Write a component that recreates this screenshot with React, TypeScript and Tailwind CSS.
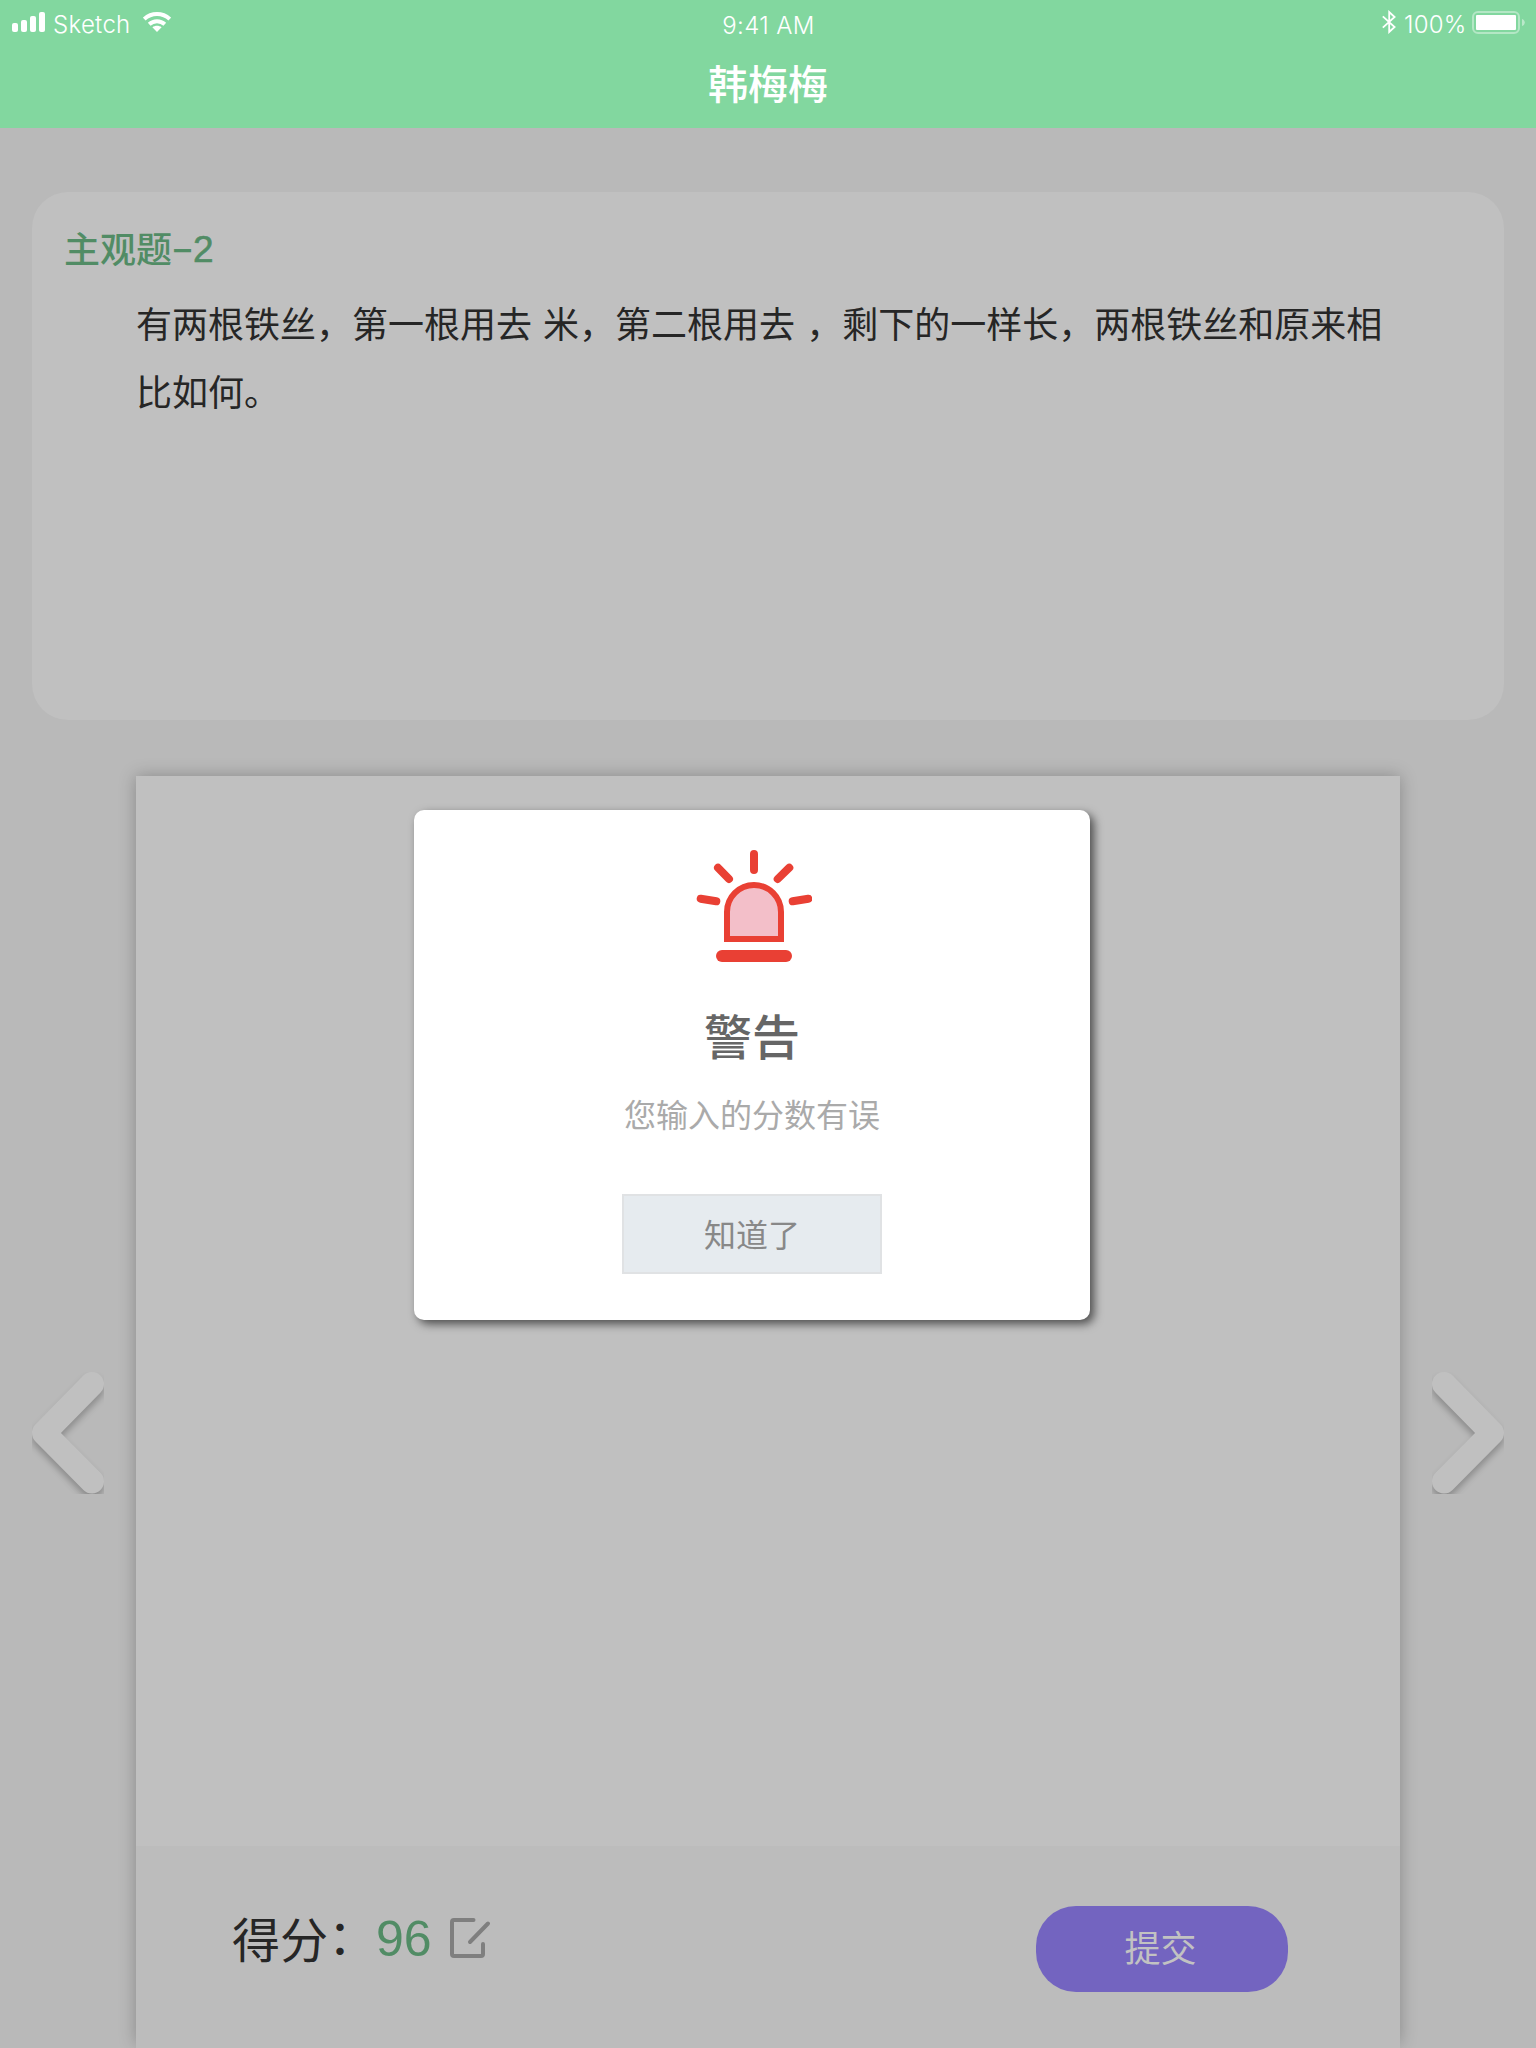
import type { ReactNode } from "react";

function SignalBars() {
  return (
    <div className="flex h-5 items-end gap-[3px]">
      <span className="h-[9px] w-1.5 rounded-[2px] bg-white" />
      <span className="h-3 w-1.5 rounded-[2px] bg-white" />
      <span className="h-4 w-1.5 rounded-[2px] bg-white" />
      <span className="h-5 w-1.5 rounded-[2px] bg-white" />
    </div>
  );
}

function WifiIcon() {
  return (
    <svg width="28" height="20" viewBox="0 0 28 20" fill="none" stroke="#fff" strokeWidth="4">
      <path d="M1.2 7.1 C8.4 .3 19.6 .3 26.8 7.1" />
      <path d="M6.2 12.3 C10.7 8.1 17.3 8.1 21.8 12.3" />
      <path d="M9.4 15.2 C12 13.2 16 13.2 18.6 15.2 L14 20 Z" fill="#fff" stroke="none" />
    </svg>
  );
}

function BluetoothIcon() {
  return (
    <svg width="14" height="24" viewBox="0 0 14 24" fill="none" stroke="#fff" strokeWidth="1.8">
      <path d="M.8 6.3 L12.6 17 L7.2 22 V2 L12.6 7 L.8 17.7" />
    </svg>
  );
}

function BatteryIcon() {
  return (
    <svg width="53" height="24" viewBox="0 0 53 24" fill="none">
      <rect x="1" y="1" width="46" height="21" rx="5" stroke="#fff" strokeOpacity=".4" strokeWidth="2" />
      <rect x="4" y="4" width="40" height="15" rx="1" fill="#fff" />
      <path d="M50 8 C53.7 9 53.7 14 50 15 Z" fill="#fff" fillOpacity=".45" />
    </svg>
  );
}

function AlarmIcon() {
  return (
    <svg
      className="ml-1"
      width="116"
      height="112"
      viewBox="0 0 116 112"
      fill="none"
      stroke="#e94034"
      strokeWidth="8"
      strokeLinecap="round"
    >
      <path d="M58 4 V20 M22 17.7 L33 29 M93.3 17.7 L81.7 29 M4.7 48.7 L20.3 51.3 M112.3 48.7 L96.7 51.3" />
      <path d="M31 89 V62 a27 27 0 0 1 54 0 V89 Z" fill="#f3bfc9" strokeWidth="6" strokeLinecap="butt" />
      <rect x="20" y="100" width="76" height="12" rx="6" fill="#e94034" stroke="none" />
    </svg>
  );
}

function EditIcon() {
  return (
    <svg width="42" height="40" viewBox="0 0 42 40" fill="none" stroke="#7f7f7f" strokeWidth="4" strokeLinecap="round">
      <path d="M23.5 2 H4 Q2 2 2 4 V36 Q2 38 4 38 H31 Q33 38 33 36 V26 M20 24 L38 5.5" />
    </svg>
  );
}

function Arrow({ d, label }: { d: string; label: string }) {
  return (
    <button aria-label={label} className="mt-[596px] h-[122px] w-[72px]">
      <svg width="72" height="122" viewBox="0 0 72 122" fill="none" strokeWidth="24" strokeLinecap="round" strokeLinejoin="round">
        <path d={d} stroke="#c0c0c0" className="drop-shadow-[0_5px_3px_rgba(0,0,0,0.24)]" />
      </svg>
    </button>
  );
}

function StatusText({ children }: { children: ReactNode }) {
  return <span className="font-['Inter'] text-2xl leading-6 whitespace-nowrap">{children}</span>;
}

export default function App() {
  return (
    <div className="relative flex h-[2048px] w-[1536px] flex-col overflow-hidden bg-[#b9b9b9] font-['Noto_Sans_CJK_SC',sans-serif] text-[#262626]">
      <header className="h-32 shrink-0 bg-[#82d79f] text-white">
        <div className="grid h-12 grid-cols-3 items-start pr-[11px] pl-3">
          <div className="flex pt-3">
            <SignalBars />
            <div className="ml-2 w-[90px] pt-px font-light tracking-[0.3px]">
              <StatusText>Sketch</StatusText>
            </div>
            <WifiIcon />
          </div>
          <div className="pt-3.5 text-center font-light tracking-[0.4px]">
            <StatusText>9:41 AM</StatusText>
          </div>
          <div className="flex justify-end pt-2.5">
            <BluetoothIcon />
            <div className="ml-2 w-[68px] pt-[3px] font-light tracking-[0.2px]">
              <StatusText>100%</StatusText>
            </div>
            <div className="pt-px">
              <BatteryIcon />
            </div>
          </div>
        </div>
        <h1 className="text-center text-[40px] leading-[68px] font-medium">韩梅梅</h1>
      </header>

      <section className="mx-8 mt-16 h-[528px] shrink-0 rounded-[36px] bg-[#c0c0c0] px-8 pt-[30px]">
        <h2 className="flex h-[50px] text-4xl leading-[50px] font-medium whitespace-nowrap text-[#518c65]">
          主观题
          <span className="mt-0.5 w-[21px] text-center font-['Inter'] text-[34px] leading-[50px]">–</span>
          <span className="mt-[3px] font-['Liberation_Sans'] text-[37px] leading-[50px] [-webkit-text-stroke:0.6px_#518c65]">2</span>
        </h2>
        <p className="mt-4 ml-[72px] w-[1260px] text-4xl leading-[68px] [word-spacing:3px]">
          有两根铁丝，第一根用去 米，第二根用去 ，剩下的一样长，两根铁丝和原来相
          <br />
          比如何。
        </p>
      </section>

      <main className="mt-14 flex shrink-0 items-start justify-between px-8">
        <Arrow label="上一题" d="M60 12 L12 61 L60 109.5" />
        <div className="h-[1268px] w-[1264px] bg-[#c0c0c0] shadow-[0_0_16px_rgba(0,0,0,0.26)]">
          <div className="h-[1070px]" />
          <footer className="flex h-[202px] items-start justify-between bg-[#bcbcbc] pr-28 pl-24">
            <div className="flex pt-[55px]">
              <span className="flex w-[144px] text-5xl leading-[72px] whitespace-nowrap">
                得分<span className="-mt-1">：</span>
              </span>
              <span className="w-[74px] pt-0.5 font-['Liberation_Sans'] text-[50px] leading-[72px] text-[#518c65]">96</span>
              <div className="pt-[17px]">
                <EditIcon />
              </div>
            </div>
            <button className="mt-[60px] h-[86px] w-[252px] rounded-[40px] bg-[#7364c0] pr-[3px] pb-1.5 text-4xl leading-[80px] text-[#c2c2c2]">
              提交
            </button>
          </footer>
        </div>
        <Arrow label="下一题" d="M12 12 L60 61 L12 109.5" />
      </main>

      <div
        role="alertdialog"
        className="absolute top-[810px] left-[414px] flex h-[510px] w-[676px] flex-col items-center rounded-[10px] bg-white pt-10 shadow-[4px_4px_10px_rgba(0,0,0,0.6)]"
      >
        <AlarmIcon />
        <h3 className="mt-[38px] text-5xl leading-[68px] font-medium text-[#666]">警告</h3>
        <p className="mt-[22px] text-[32px] leading-[46px] text-[#aaa]">您输入的分数有误</p>
        <button className="mt-[58px] h-20 w-[260px] border-2 border-[#e0e2e4] bg-[#e6ebef] pb-0.5 text-[32px] leading-[74px] text-[#888]">
          知道了
        </button>
      </div>
    </div>
  );
}
